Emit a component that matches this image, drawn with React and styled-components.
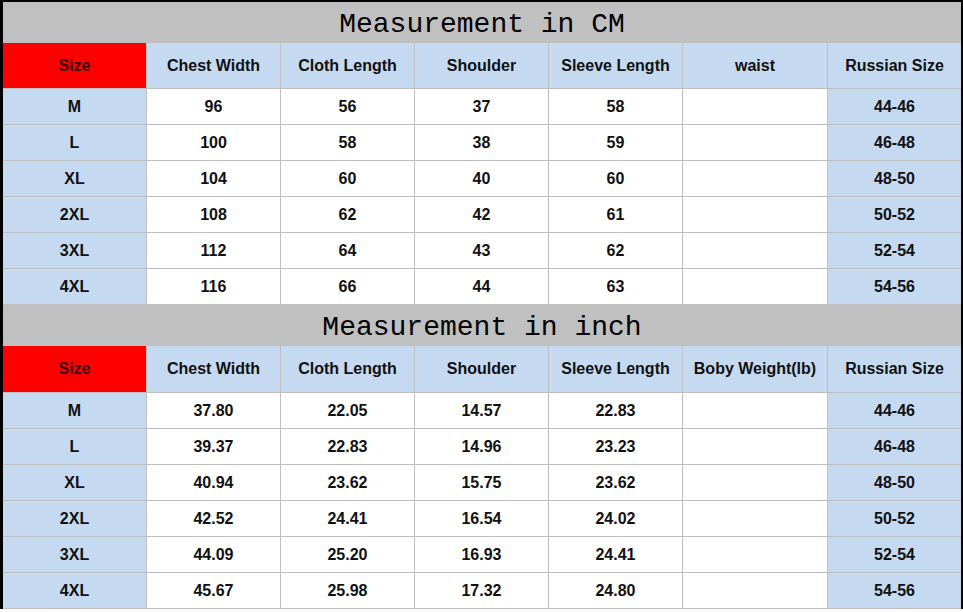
import React from "react";
import styled, { createGlobalStyle } from "styled-components";

const GlobalStyle = createGlobalStyle`
  html, body {
    margin: 0;
    padding: 0;
    background: #ffffff;
  }
  body {
    width: 963px;
    height: 612px;
    overflow: hidden;
    font-family: "Liberation Sans", Arial, sans-serif;
  }
`;

const cmSection = {
  title: "Measurement in CM",
  headers: ["Size", "Chest Width", "Cloth Length", "Shoulder", "Sleeve Length", "waist", "Russian Size"],
  headerHeight: 45,
  rows: [
    ["M", "96", "56", "37", "58", "", "44-46"],
    ["L", "100", "58", "38", "59", "", "46-48"],
    ["XL", "104", "60", "40", "60", "", "48-50"],
    ["2XL", "108", "62", "42", "61", "", "50-52"],
    ["3XL", "112", "64", "43", "62", "", "52-54"],
    ["4XL", "116", "66", "44", "63", "", "54-56"],
  ],
};

const inchSection = {
  title: "Measurement in inch",
  headers: ["Size", "Chest Width", "Cloth Length", "Shoulder", "Sleeve Length", "Boby Weight(lb)", "Russian Size"],
  headerHeight: 46,
  rows: [
    ["M", "37.80", "22.05", "14.57", "22.83", "", "44-46"],
    ["L", "39.37", "22.83", "14.96", "23.23", "", "46-48"],
    ["XL", "40.94", "23.62", "15.75", "23.62", "", "48-50"],
    ["2XL", "42.52", "24.41", "16.54", "24.02", "", "50-52"],
    ["3XL", "44.09", "25.20", "16.93", "24.41", "", "52-54"],
    ["4XL", "45.67", "25.98", "17.32", "24.80", "", "54-56"],
  ],
};

function SizeSection({ data }) {
  return (
    <Grid $headerHeight={data.headerHeight}>
      <Title>{data.title}</Title>
      {data.headers.map((h, i) => (
        <HeadCell key={h} $red={i === 0}>
          {h}
        </HeadCell>
      ))}
      {data.rows.map((row) =>
        row.map((v, i) => (
          <Cell key={row[0] + i} $blue={i === 0 || i === row.length - 1}>
            {v}
          </Cell>
        ))
      )}
    </Grid>
  );
}

export default function App() {
  return (
    <>
      <GlobalStyle />
      <Frame>
        <SizeSection data={cmSection} />
        <SizeSection data={inchSection} />
      </Frame>
    </>
  );
}

const Frame = styled.div`
  width: 958px;
  border-top: 2px solid #000;
  border-left: 3px solid #000;
  border-right: 2px solid #000;
  display: flex;
  flex-direction: column;
`;

const Grid = styled.div`
  display: grid;
  grid-template-columns: 143px 133px 133px 133px 133px 144px 133px;
  grid-template-rows: 40px ${(p) => p.$headerHeight}px repeat(6, 35px);
  gap: 1px;
  padding-bottom: 1px;
  background: #bfbfbf;
`;

const Title = styled.div`
  grid-column: 1 / -1;
  background: #c0c0c0;
  display: flex;
  align-items: center;
  justify-content: center;
  font-family: "Liberation Mono", "Courier New", monospace;
  font-size: 28px;
  color: #000;
  padding-top: 5px;
`;

const HeadCell = styled.div`
  background: ${(p) => (p.$red ? "#ff0000" : "#c5d9f1")};
  color: ${(p) => (p.$red ? "#3a0000" : "#111")};
  display: flex;
  align-items: center;
  justify-content: center;
  font-weight: bold;
  font-size: 16px;
  white-space: nowrap;
`;

const Cell = styled.div`
  background: ${(p) => (p.$blue ? "#c5d9f1" : "#ffffff")};
  color: #111;
  display: flex;
  align-items: center;
  justify-content: center;
  font-weight: bold;
  font-size: 16px;
`;
